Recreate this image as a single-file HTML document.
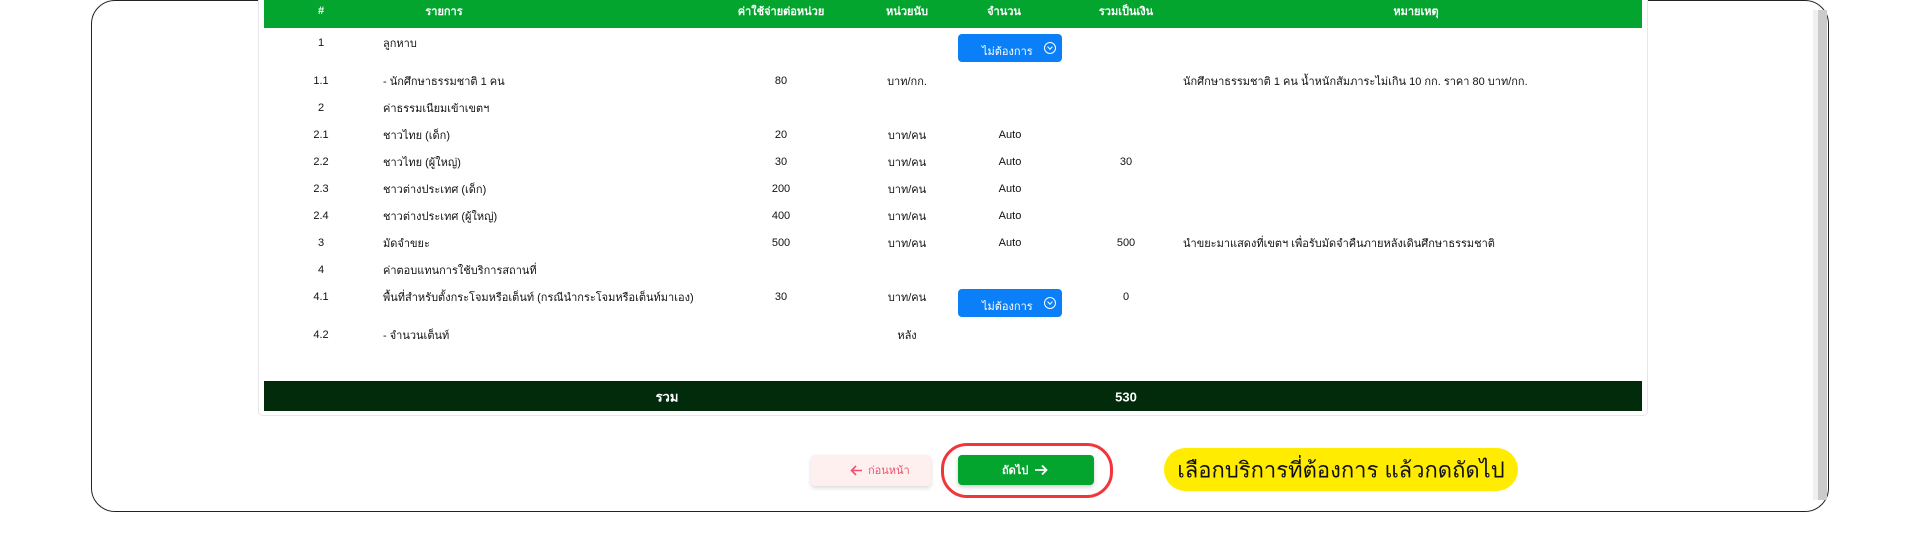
<!DOCTYPE html>
<html><head><meta charset="utf-8"><style>
*{margin:0;padding:0;box-sizing:border-box}
body{width:1920px;height:539px;background:#fff;position:relative;overflow:hidden;font-family:"Liberation Sans","DejaVu Sans",sans-serif;font-size:11px;color:#111}
.frame{position:absolute;left:91px;top:0;width:1738px;height:512px;border:1.5px solid #222;border-radius:24px;background:#fff}
.sb{position:absolute;left:1818px;top:10px;width:9px;height:490px;background:#cbcbcb}
.sbl{position:absolute;left:1813px;top:10px;width:5px;height:490px;background:#f0f0f0}
.card{position:absolute;left:258px;top:-5px;width:1390px;height:421px;border:1px solid #e6e6ea;border-radius:5px;background:#fff}
.hdr{position:absolute;left:264px;top:0;width:1378px;height:28px;background:#04a52e}
.tot{position:absolute;left:264px;top:381px;width:1378px;height:30px;background:#022b0c}
.t{position:absolute;white-space:nowrap;transform:translate(-50%,-50%)}
.l{position:absolute;white-space:nowrap;transform:translateY(-50%)}
.w{color:#fff}
.hdr2{font-weight:bold}
.btn{position:absolute;width:104px;height:28px;background:#0a7ff7;border-radius:4px;color:#fff}
.btn span{position:absolute;left:24px;top:8px}
.btn i{position:absolute;left:86px;top:8px;width:12px;height:12px;border:1.3px solid #fff;border-radius:50%}
.btn i:after{content:"";position:absolute;left:3px;top:1.5px;width:3px;height:3px;border-right:1.3px solid #fff;border-bottom:1.3px solid #fff;transform:rotate(45deg)}
</style></head><body>
<div class="frame"></div>
<div class="sbl"></div><div class="sb"></div>
<div class="card"></div>
<div class="hdr"></div>
<div class="tot"></div>
<div class="t w hdr2" style="left:321px;top:11px">#</div>
<div class="t w hdr2" style="left:444px;top:11px">รายการ</div>
<div class="t w hdr2" style="left:781px;top:11px">ค่าใช้จ่ายต่อหน่วย</div>
<div class="t w hdr2" style="left:907px;top:11px">หน่วยนับ</div>
<div class="t w hdr2" style="left:1004px;top:11px">จำนวน</div>
<div class="t w hdr2" style="left:1126px;top:11px">รวมเป็นเงิน</div>
<div class="t w hdr2" style="left:1416px;top:11px">หมายเหตุ</div>

<div class="t" style="left:321px;top:43px">1</div><div class="l" style="left:383px;top:43px">ลูกหาบ</div>
<div class="btn" style="left:958px;top:34px"><span>ไม่ต้องการ</span><i></i></div>
<div class="t" style="left:321px;top:81px">1.1</div><div class="l" style="left:383px;top:81px">- นักศึกษาธรรมชาติ 1 คน</div><div class="t" style="left:781px;top:81px">80</div><div class="t" style="left:907px;top:81px">บาท/กก.</div><div class="l" style="left:1183px;top:81px">นักศึกษาธรรมชาติ 1 คน น้ำหนักสัมภาระไม่เกิน 10 กก. ราคา 80 บาท/กก.</div>
<div class="t" style="left:321px;top:108px">2</div><div class="l" style="left:383px;top:108px">ค่าธรรมเนียมเข้าเขตฯ</div>
<div class="t" style="left:321px;top:135px">2.1</div><div class="l" style="left:383px;top:135px">ชาวไทย (เด็ก)</div><div class="t" style="left:781px;top:135px">20</div><div class="t" style="left:907px;top:135px">บาท/คน</div><div class="t" style="left:1010px;top:135px">Auto</div>
<div class="t" style="left:321px;top:162px">2.2</div><div class="l" style="left:383px;top:162px">ชาวไทย (ผู้ใหญ่)</div><div class="t" style="left:781px;top:162px">30</div><div class="t" style="left:907px;top:162px">บาท/คน</div><div class="t" style="left:1010px;top:162px">Auto</div><div class="t" style="left:1126px;top:162px">30</div>
<div class="t" style="left:321px;top:189px">2.3</div><div class="l" style="left:383px;top:189px">ชาวต่างประเทศ (เด็ก)</div><div class="t" style="left:781px;top:189px">200</div><div class="t" style="left:907px;top:189px">บาท/คน</div><div class="t" style="left:1010px;top:189px">Auto</div>
<div class="t" style="left:321px;top:216px">2.4</div><div class="l" style="left:383px;top:216px">ชาวต่างประเทศ (ผู้ใหญ่)</div><div class="t" style="left:781px;top:216px">400</div><div class="t" style="left:907px;top:216px">บาท/คน</div><div class="t" style="left:1010px;top:216px">Auto</div>
<div class="t" style="left:321px;top:243px">3</div><div class="l" style="left:383px;top:243px">มัดจำขยะ</div><div class="t" style="left:781px;top:243px">500</div><div class="t" style="left:907px;top:243px">บาท/คน</div><div class="t" style="left:1010px;top:243px">Auto</div><div class="t" style="left:1126px;top:243px">500</div><div class="l" style="left:1183px;top:243px">นำขยะมาแสดงที่เขตฯ เพื่อรับมัดจำคืนภายหลังเดินศึกษาธรรมชาติ</div>
<div class="t" style="left:321px;top:270px">4</div><div class="l" style="left:383px;top:270px">ค่าตอบแทนการใช้บริการสถานที่</div>
<div class="t" style="left:321px;top:297px">4.1</div><div class="l" style="left:383px;top:297px">พื้นที่สำหรับตั้งกระโจมหรือเต็นท์ (กรณีนำกระโจมหรือเต็นท์มาเอง)</div><div class="t" style="left:781px;top:297px">30</div><div class="t" style="left:907px;top:297px">บาท/คน</div><div class="t" style="left:1126px;top:297px">0</div>
<div class="btn" style="left:958px;top:289px"><span>ไม่ต้องการ</span><i></i></div>
<div class="t" style="left:321px;top:335px">4.2</div><div class="l" style="left:383px;top:335px">- จำนวนเต็นท์</div><div class="t" style="left:907px;top:335px">หลัง</div>
<div class="t w" style="left:667px;top:397px;font-size:13px;font-weight:bold">รวม</div>
<div class="t w" style="left:1126px;top:397px;font-size:13px;font-weight:bold">530</div>

<div style="position:absolute;left:811px;top:455px;width:120px;height:31px;background:#fff0f0;border-radius:4px;box-shadow:0 2px 4px rgba(0,0,0,.15)"></div>
<svg style="position:absolute;left:850px;top:464px" width="13" height="13" viewBox="0 0 13 13"><path d="M12 6.5H1.5M6 2L1.5 6.5L6 11" stroke="#f0506e" stroke-width="1.6" fill="none"/></svg>
<div class="l" style="left:868px;top:470px;color:#f0506e">ก่อนหน้า</div>
<div style="position:absolute;left:941px;top:443px;width:172px;height:55px;border:3px solid #f2353b;border-radius:26px"></div>
<div style="position:absolute;left:958px;top:455px;width:136px;height:30px;background:#04a52e;border-radius:4px;box-shadow:0 2px 4px rgba(0,0,0,.2)"></div>
<div class="l w" style="left:1002px;top:470px;font-weight:bold">ถัดไป</div>
<svg style="position:absolute;left:1034px;top:463px" width="14" height="14" viewBox="0 0 14 14"><path d="M1 7H12.5M8 2.5L12.5 7L8 11.5" stroke="#fff" stroke-width="1.8" fill="none"/></svg>
<div style="position:absolute;left:1164px;top:448px;width:354px;height:43px;background:#ffec00;border-radius:22px"></div>
<div class="t" style="left:1341px;top:470px;font-size:22px;color:#111">เลือกบริการที่ต้องการ แล้วกดถัดไป</div>
</body></html>
